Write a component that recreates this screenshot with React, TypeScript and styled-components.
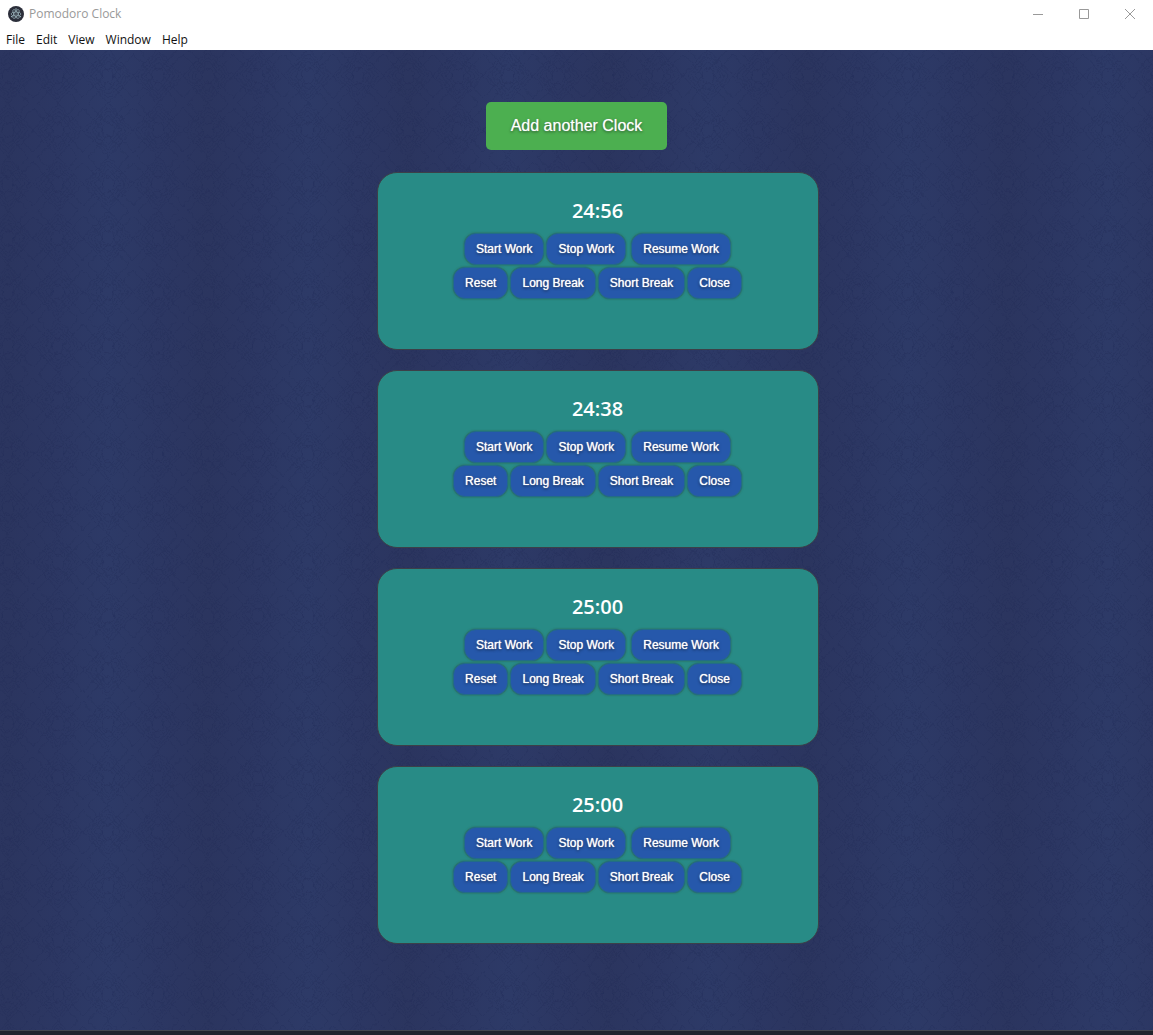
import React, { useState } from 'react';
import styled, { createGlobalStyle } from 'styled-components';

const GlobalStyle = createGlobalStyle`
  *, *::before, *::after { box-sizing: border-box; }
  body { margin: 0; background: #2b3661; }
  button { font: inherit; cursor: pointer; }
`;

const Shell = styled.div`
  min-height: 100vh;
  display: flex;
  flex-direction: column;
  font-family: "Liberation Sans", Arial, sans-serif;
`;

const TitleBar = styled.header`
  display: flex;
  align-items: center;
  height: 28px;
  padding-left: 8px;
  gap: 5px;
  background: #fff;
  color: #999;
  font: 12px/18px "Open Sans", sans-serif;
`;

const Title = styled.span`
  flex: 1;
`;

const WindowButton = styled.button`
  display: grid;
  place-items: center;
  width: 46px;
  height: 28px;
  padding: 0;
  border: 0;
  background: none;
  color: #999;
`;

const WindowButtons = styled.div`
  display: flex;
`;

const MenuBar = styled.nav`
  display: flex;
  gap: 11px;
  height: 22px;
  padding: 2px 6px 0;
  background: #fff;
`;

const MenuItem = styled.button`
  padding: 0;
  border: 0;
  background: none;
  color: #111;
  font: 12px/20px "Open Sans", sans-serif;
`;

const Page = styled.main`
  position: relative;
  isolation: isolate;
  flex: 1;
  display: flex;
  flex-direction: column;
  align-items: center;
  padding: 52px 0 86px;
`;

const Backdrop = styled.svg`
  position: absolute;
  inset: 0;
  z-index: -1;
  width: 100%;
  height: 100%;
`;

const AddButton = styled.button`
  height: 48px;
  padding: 0 25px;
  border: 0;
  border-radius: 5px;
  background: #4caf50;
  color: #fff;
  font-size: 16px;
  text-shadow: 0 0 1px rgba(255, 255, 255, 0.6), 0 1px 3px rgba(0, 0, 0, 0.6);
`;

const ClockList = styled.ul`
  display: flex;
  flex-direction: column;
  gap: 20px;
  margin: 22px 0 0;
  padding: 0 0 0 42px;
  list-style: none;
`;

const Card = styled.li`
  display: flex;
  flex-direction: column;
  align-items: center;
  width: 442px;
  max-width: 100%;
  padding: 24px 0 50px;
  border: 1px solid #3c4048;
  border-radius: 20px;
  background: #288b86;
`;

const Time = styled.time`
  margin-bottom: 8px;
  color: #fff;
  font: 600 20px/28px "Open Sans", sans-serif;
`;

const ButtonRow = styled.div`
  display: flex;
  gap: 2px;
  & + & { margin-top: 2px; }
`;

const ClockButton = styled.button<{ $spaced?: boolean }>`
  height: 32px;
  padding: 0 11px;
  margin-left: ${(p) => (p.$spaced ? '3px' : '0')};
  border: 1px solid #226c88;
  border-radius: 12px;
  background: #2658ab;
  color: #fff;
  font-size: 12px;
  box-shadow: 0 0 2px rgba(50, 70, 50, 0.7);
  text-shadow: 0 0 1px #fff, 0 1px 3px rgba(0, 0, 0, 0.7);
`;

const BottomEdge = styled.footer`
  height: 5px;
  border-top: 1px solid #42464d;
  background: #20232c;
`;

const AppLogo = () => (
  <svg width="16" height="16" viewBox="0 0 16 16" aria-hidden="true">
    <circle cx="8" cy="8" r="8" fill="#2b2e3a" />
    <g fill="none" stroke="#a9c4cc" strokeWidth="0.7" opacity="0.9">
      <ellipse cx="8" cy="8" rx="5" ry="2" />
      <ellipse cx="8" cy="8" rx="5" ry="2" transform="rotate(60 8 8)" />
      <ellipse cx="8" cy="8" rx="5" ry="2" transform="rotate(120 8 8)" />
    </g>
    <g fill="#a9c4cc">
      <circle cx="8" cy="8" r="0.6" />
      <circle cx="3.6" cy="10.6" r="0.7" />
      <circle cx="12.4" cy="10.6" r="0.7" />
      <circle cx="8" cy="3" r="0.7" />
    </g>
  </svg>
);

const FabricBackdrop = () => (
  <Backdrop aria-hidden="true">
    <defs>
      <linearGradient id="fold">
        <stop offset="0" stopColor="#2b355f" />
        <stop offset="0.25" stopColor="#2c3763" />
        <stop offset="0.5" stopColor="#2d3a67" />
        <stop offset="0.75" stopColor="#2c3763" />
        <stop offset="1" stopColor="#2b355f" />
      </linearGradient>
      <pattern id="folds" x="8" width="200" height="200" patternUnits="userSpaceOnUse">
        <rect width="200" height="200" fill="url(#fold)" />
      </pattern>
      <pattern id="weave" x="83" y="53" width="50" height="54" patternUnits="userSpaceOnUse">
        <g fill="none" stroke="#17244f" strokeOpacity="0.2">
          <path d="M0 27 25 0 50 27 25 54Z" />
          <path d="M4 27 25 4 46 27 25 50Z" />
          <path d="M8 27 25 8 42 27 25 46Z" />
          <path d="M12 27 25 12 38 27 25 42Z" />
          <path d="M0 5 20 27 0 49M50 5 30 27 50 49M5 0 25 22 45 0M5 54 25 32 45 54" />
          <path d="M19 27q0-7 6-8 6 1 6 8t-6 8q-6-1-6-8Z" />
        </g>
      </pattern>
      <filter id="ripple" x="0" y="0" width="100%" height="100%" colorInterpolationFilters="sRGB">
        <feTurbulence type="fractalNoise" baseFrequency="0.2" numOctaves="2" seed="4" />
        <feDisplacementMap in="SourceGraphic" scale="5" xChannelSelector="R" yChannelSelector="G" />
      </filter>
    </defs>
    <rect width="100%" height="100%" fill="url(#folds)" />
    <rect width="100%" height="100%" fill="url(#weave)" filter="url(#ripple)" />
  </Backdrop>
);

const format = (seconds: number) =>
  `${Math.floor(seconds / 60)}:${String(seconds % 60).padStart(2, '0')}`;

const Clock = ({ seconds, onClose }: { seconds: number; onClose: () => void }) => (
  <Card>
    <Time>{format(seconds)}</Time>
    <ButtonRow>
      <ClockButton>Start Work</ClockButton>
      <ClockButton>Stop Work</ClockButton>
      <ClockButton $spaced>Resume Work</ClockButton>
    </ButtonRow>
    <ButtonRow>
      <ClockButton>Reset</ClockButton>
      <ClockButton>Long Break</ClockButton>
      <ClockButton>Short Break</ClockButton>
      <ClockButton onClick={onClose}>Close</ClockButton>
    </ButtonRow>
  </Card>
);

export default function App() {
  const [clocks, setClocks] = useState([
    { id: 1, seconds: 1496 },
    { id: 2, seconds: 1478 },
    { id: 3, seconds: 1500 },
    { id: 4, seconds: 1500 },
  ]);
  const add = () => setClocks((list) => [...list, { id: Date.now(), seconds: 1500 }]);
  const close = (id: number) => setClocks((list) => list.filter((c) => c.id !== id));

  return (
    <Shell>
      <GlobalStyle />
      <TitleBar>
        <AppLogo />
        <Title>Pomodoro Clock</Title>
        <WindowButtons>
          <WindowButton aria-label="Minimize">
            <svg width="10" height="10" stroke="currentColor"><path d="M0 5.5H10" /></svg>
          </WindowButton>
          <WindowButton aria-label="Maximize">
            <svg width="10" height="10" stroke="currentColor" fill="none"><path d="M.5.5h9v9h-9Z" /></svg>
          </WindowButton>
          <WindowButton aria-label="Close window">
            <svg width="10" height="10" stroke="currentColor"><path d="M0 0 10 10M10 0 0 10" /></svg>
          </WindowButton>
        </WindowButtons>
      </TitleBar>
      <MenuBar>
        {['File', 'Edit', 'View', 'Window', 'Help'].map((m) => (
          <MenuItem key={m}>{m}</MenuItem>
        ))}
      </MenuBar>
      <Page>
        <FabricBackdrop />
        <AddButton onClick={add}>Add another Clock</AddButton>
        <ClockList>
          {clocks.map((c) => (
            <Clock key={c.id} seconds={c.seconds} onClose={() => close(c.id)} />
          ))}
        </ClockList>
      </Page>
      <BottomEdge />
    </Shell>
  );
}
